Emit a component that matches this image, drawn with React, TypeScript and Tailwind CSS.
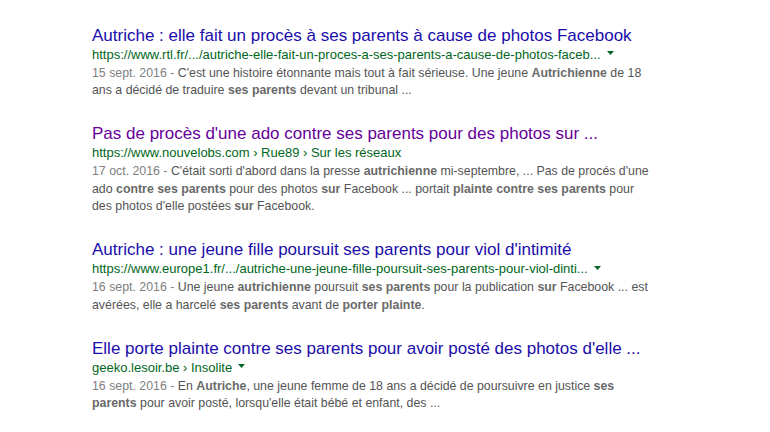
import React from "react";

const Arrow = () => (
  <span className="inline-block ml-[6px] align-middle relative top-[-2px]">
    <svg width="7" height="4" viewBox="0 0 7 4">
      <path d="M0 0 L7 0 L3.5 4 Z" fill="#006621" />
    </svg>
  </span>
);

const B = ({ children }: { children: React.ReactNode }) => (
  <b className="font-bold text-[#6a6a6a]">{children}</b>
);

type R = {
  title: string;
  visited?: boolean;
  url: React.ReactNode;
  arrow?: boolean;
  snippet: React.ReactNode;
};

const results: R[] = [
  {
    title: "Autriche : elle fait un procès à ses parents à cause de photos Facebook",
    url: "https://www.rtl.fr/.../autriche-elle-fait-un-proces-a-ses-parents-a-cause-de-photos-faceb...",
    arrow: true,
    snippet: (
      <>
        <span className="text-[#808080]">15 sept. 2016 - </span>C'est une histoire étonnante mais tout à fait sérieuse. Une jeune <B>Autrichienne</B> de 18
        <br />
        ans a décidé de traduire <B>ses parents</B> devant un tribunal ...
      </>
    ),
  },
  {
    title: "Pas de procès d'une ado contre ses parents pour des photos sur ...",
    visited: true,
    url: "https://www.nouvelobs.com › Rue89 › Sur les réseaux",
    snippet: (
      <>
        <span className="text-[#808080]">17 oct. 2016 - </span>C'était sorti d'abord dans la presse <B>autrichienne</B> mi-septembre, ... Pas de procés d'une
        <br />
        ado <B>contre ses parents</B> pour des photos <B>sur</B> Facebook ... portait <B>plainte contre ses parents</B> pour
        <br />
        des photos d'elle postées <B>sur</B> Facebook.
      </>
    ),
  },
  {
    title: "Autriche : une jeune fille poursuit ses parents pour viol d'intimité",
    url: "https://www.europe1.fr/.../autriche-une-jeune-fille-poursuit-ses-parents-pour-viol-dinti...",
    arrow: true,
    snippet: (
      <>
        <span className="text-[#808080]">16 sept. 2016 - </span>Une jeune <B>autrichienne</B> poursuit <B>ses parents</B> pour la publication <B>sur</B> Facebook ... est
        <br />
        avérées, elle a harcelé <B>ses parents</B> avant de <B>porter plainte</B>.
      </>
    ),
  },
  {
    title: "Elle porte plainte contre ses parents pour avoir posté des photos d'elle ...",
    url: "geeko.lesoir.be › Insolite",
    arrow: true,
    snippet: (
      <>
        <span className="text-[#808080]">16 sept. 2016 - </span>En <B>Autriche</B>, une jeune femme de 18 ans a décidé de poursuivre en justice <B>ses</B>
        <br />
        <B>parents</B> pour avoir posté, lorsqu'elle était bébé et enfant, des ...
      </>
    ),
  },
];

export default function App() {
  return (
    <div
      className="w-[770px] h-[432px] bg-white overflow-hidden pl-[92px] pt-[25.5px]"
      style={{ fontFamily: '"Liberation Sans", Arial, sans-serif' }}
    >
      <div className="flex flex-col gap-[24.5px]">
        {results.map((r, i) => (
          <div key={i} className="flex flex-col">
            <div
              className={`text-[17px] leading-[20px] whitespace-nowrap ${
                r.visited ? "text-[#660099]" : "text-[#1a0dab]"
              }`}
            >
              {r.title}
            </div>
            <div className="text-[13px] leading-[17.6px] text-[#006621] whitespace-nowrap">
              {r.url}
              {r.arrow && <Arrow />}
            </div>
            <div className="mt-[1.5px] text-[12.35px] leading-[17.5px] text-[#545454] whitespace-nowrap">
              {r.snippet}
            </div>
          </div>
        ))}
      </div>
    </div>
  );
}
